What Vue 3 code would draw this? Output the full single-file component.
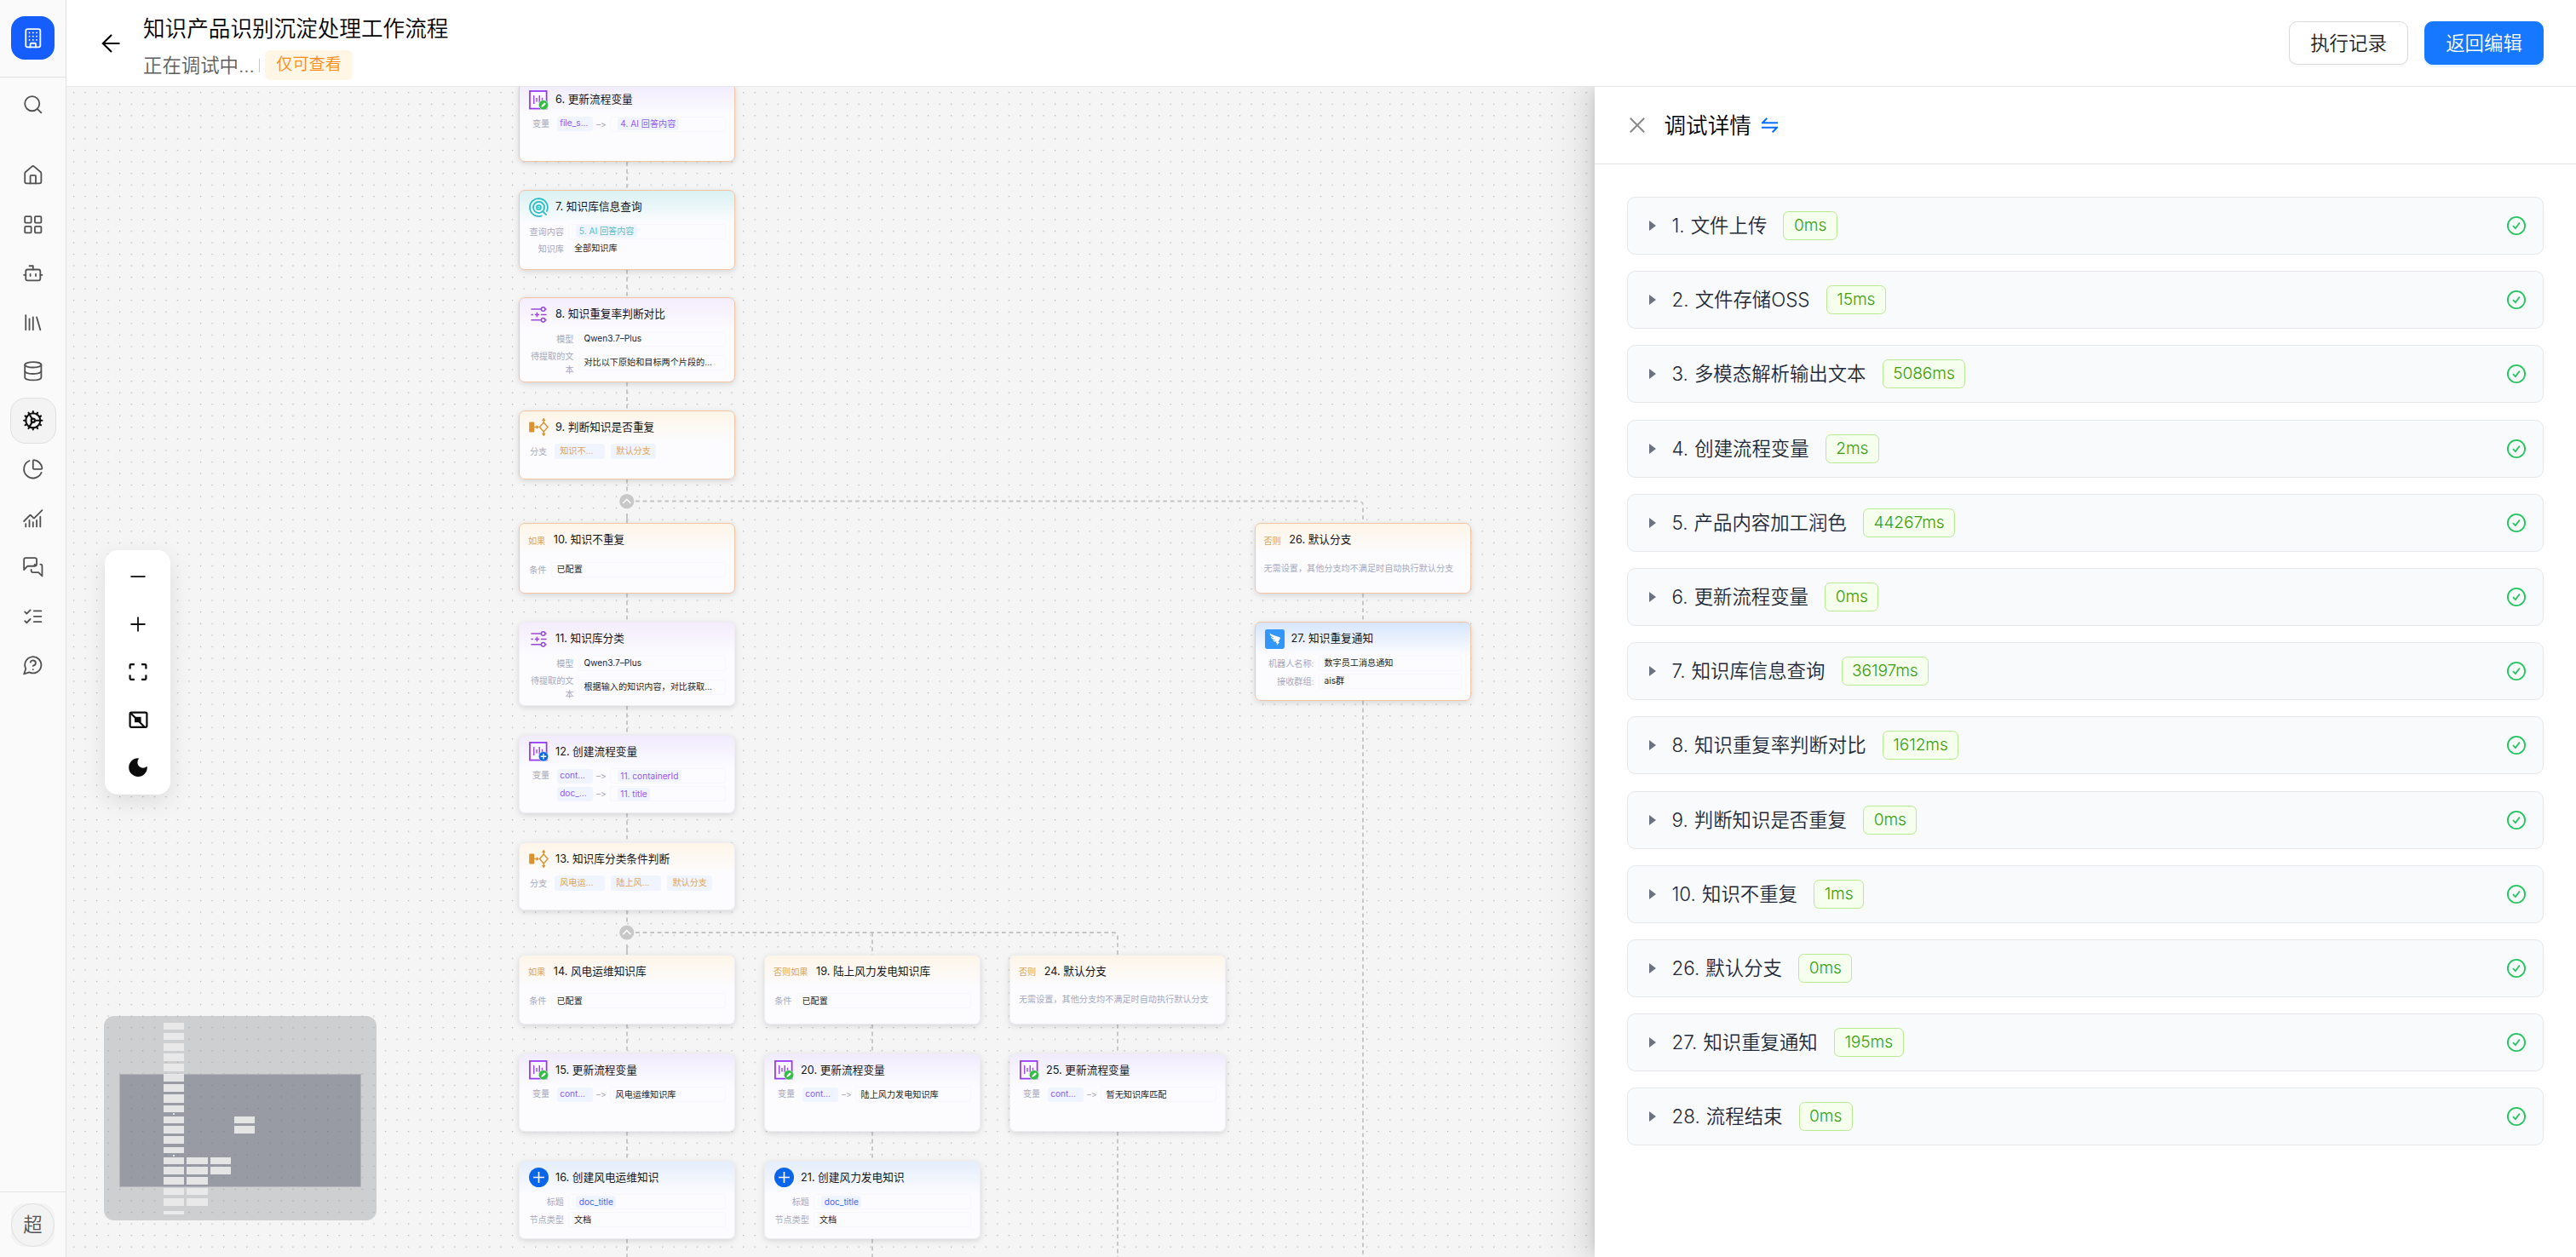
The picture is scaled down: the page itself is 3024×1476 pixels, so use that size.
<template>
  <div class="app">
    <aside class="sidebar">
      <div class="logo-wrap">
        <div class="logo">
          <svg viewBox="0 0 24 24" class="ico">
            <rect x="4" y="2" width="16" height="20" rx="2" />
            <path d="M9 22v-3.4a1 1 0 0 1 1-1h4a1 1 0 0 1 1 1V22" />
            <path d="M8 6h.01M12 6h.01M16 6h.01M8 10h.01M12 10h.01M16 10h.01M8 14h.01M12 14h.01M16 14h.01" />
          </svg>
        </div>
      </div>
      <div class="nav-item search">
        <svg viewBox="0 0 24 24" class="ico"><circle cx="11" cy="11" r="8" /><path d="m21 21-4.3-4.3" /></svg>
      </div>
      <nav class="nav">
        <div
          v-for="item in navItems"
          :key="item.name"
          class="nav-item"
          :class="{ active: item.name === activeNav }"
          @click="activeNav = item.name"
        >
          <svg viewBox="0 0 24 24" class="ico"><path v-for="d in item.paths" :key="d" :d="d" /></svg>
        </div>
      </nav>
      <div class="user-wrap">
        <div class="avatar"><span>超</span></div>
      </div>
    </aside>

    <main class="main">
      <header class="header">
        <svg class="back" viewBox="0 0 22 22"><path d="M21.5 11H1.5M12 1 1.8 11 12 21" /></svg>
        <div class="heading">
          <div class="title">知识产品识别沉淀处理工作流程</div>
          <div class="status">
            <span>正在调试中...</span>
            <i class="divider"></i>
            <span class="readonly">仅可查看</span>
          </div>
        </div>
        <button class="btn">执行记录</button>
        <button class="btn primary">返回编辑</button>
      </header>

      <div class="content">
        <div class="canvas">
          <svg class="layer" width="1794" height="1374">
            <defs>
              <pattern id="dots" x="7.83" y="6.1" width="13.555" height="13.555" patternUnits="userSpaceOnUse">
                <circle cx="0.7" cy="0.7" r="0.62" fill="#979797" />
              </pattern>
            </defs>
            <rect width="1794" height="1374" fill="url(#dots)" />
            <g class="edges">
              <path v-for="d in edges" :key="d" :d="d" />
              <path class="solid" d="M658 501V512M658 1007V1019" />
            </g>
            <g v-for="y in [486.7, 993]" :key="y" :transform="`translate(657.8 ${y})`">
              <circle r="8.6" fill="#c8c8c8" />
              <path d="M-4.6 2.3 0-2.4 4.6 2.3" fill="none" stroke="#fff" stroke-width="1.5" />
            </g>
          </svg>

          <div
            v-for="node in nodes"
            :key="node.id"
            class="node"
            :class="[node.type, { ran: node.ran }]"
            :style="{ left: node.x - 78 + 'px', top: node.y - 102 + 'px', height: node.h + 'px' }"
          >
            <div class="node-head">
              <span v-if="node.prefix" class="prefix">{{ node.prefix }}</span>
              <svg v-else-if="node.icon === 'update' || node.icon === 'create'" class="node-icon" viewBox="0 0 24 24">
                <rect x="1" y="1" width="20.5" height="21.5" fill="#fbf8ff" stroke="#9333f5" stroke-width="1.8" />
                <path d="M6 6.2v10.6M9.4 9.4v4.8M12.8 6.2v9M16.2 9v4" stroke="#9a48f0" stroke-width="1.5" />
                <circle cx="17.7" cy="18" r="5.9" :fill="node.icon === 'create' ? '#0a66e8' : '#33bb44'" stroke="#fff" stroke-width=".5" />
                <path v-if="node.icon === 'create'" d="M14.2 18h7M17.7 14.5v7" stroke="#fff" stroke-width="1.4" />
                <path v-else d="m15.4 20.3.4-1.9 3.2-3.2 1.5 1.5-3.2 3.2z" fill="#fff" stroke="#fff" stroke-width=".5" />
              </svg>
              <svg v-else-if="node.icon === 'search'" class="node-icon" viewBox="0 0 24 24">
                <g fill="none" stroke="#26bcc4" stroke-width="1.8">
                  <path d="M16.1 22.1A10.9 10.9 0 1 1 21.4 17.4" />
                  <circle cx="12" cy="12" r="6.8" />
                  <circle cx="12" cy="12" r="2.6" />
                  <path d="m16.5 16.5 5 5" />
                </g>
                <circle cx="12" cy="12" r="1" fill="#26bcc4" />
              </svg>
              <svg v-else-if="node.icon === 'extract'" class="node-icon" viewBox="0 0 24 24">
                <g fill="none" stroke="#9a4bd6" stroke-width="1.6">
                  <path d="M2.5 5.2h12.3M20 5.2h1.5M2.5 18.6h12.3M20 18.6h1.5M2.5 12h2.6M14.5 12h7M7 12h5.6M9.8 9.2v5.6" />
                  <circle cx="17.4" cy="5.2" r="2.4" />
                  <circle cx="17.4" cy="18.6" r="2.4" />
                </g>
              </svg>
              <svg v-else-if="node.icon === 'branch'" class="node-icon" viewBox="0 0 24 24">
                <rect x=".2" y="5.8" width="6.3" height="12.4" rx="1" fill="#d9922f" />
                <g fill="none" stroke="#d9922f" stroke-width="1.5">
                  <path d="M6.5 12h4.5M18 1.8v4.4M18 17.8v4.4" />
                  <path d="m18 6.3 5 5.7-5 5.7-5-5.7z" />
                </g>
                <path d="m9 9.4 3.4 2.6L9 14.6zM15.6 4.2 18 .8l2.4 3.4zM15.6 19.8l2.4 3.4 2.4-3.4z" fill="#d9922f" />
              </svg>
              <svg v-else-if="node.icon === 'plus'" class="node-icon" viewBox="0 0 24 24">
                <circle cx="12" cy="12" r="12" fill="#0a66e8" />
                <path d="M5.3 12h13.4M12 5.3v13.4" stroke="#fff" stroke-width="1.7" />
              </svg>
              <svg v-else class="node-icon" viewBox="0 0 24 24">
                <rect width="24" height="24" rx="2.6" fill="#3296fa" />
                <path d="M5.6 4.6c3.4 2.2 8.3 3.7 12.2 5 .8.3 1 .9.7 1.6-.7 1.7-1.7 3.3-2.4 4.4h1.7l-3.6 4.2.6-2.9h-1.5l.6-1.9c-2.2.2-3.6-.5-4.4-1.8 1.4.2 2.3.1 3.2-.1-3-.5-4.9-1.6-5.7-3.7 1.5.7 2.9.9 4.3.9-3-1-5-2.8-5.7-5.7z" fill="#fff" />
              </svg>
              <span class="node-title">{{ node.id }}. {{ node.title }}</span>
            </div>

            <div v-if="node.note" class="note">{{ node.note }}</div>

            <div v-else-if="node.branches" class="branches">
              <span class="label">分支</span>
              <span v-for="(b, i) in node.branches" :key="i" class="branch-tag" :class="{ cut: b.endsWith('...') }">{{ b }}</span>
            </div>

            <div v-else-if="node.vars" class="vars">
              <span class="label">变量</span>
              <div class="rows">
                <div v-for="v in node.vars" :key="v.name" class="var-row">
                  <span class="chip name">{{ v.name }}</span>
                  <span class="arrow">–&gt;</span>
                  <span class="field"><span :class="{ chip: v.ref }">{{ v.value }}</span></span>
                </div>
              </div>
            </div>

            <div v-else class="form">
              <div v-for="f in node.fields" :key="f.label" class="form-row">
                <span class="label" :style="{ width: node.labelWidth + 'px' }">{{ f.label }}</span>
                <span class="field" :class="{ plain: f.plain }"><span :class="{ chip: f.ref }">{{ f.value }}</span></span>
              </div>
            </div>
          </div>

          <div class="toolbar">
            <svg viewBox="0 0 24 24"><path class="line" d="M3.5 12h17" /></svg>
            <svg viewBox="0 0 24 24"><path class="line" d="M3.5 12h17M12 3.5v17" /></svg>
            <svg viewBox="0 0 24 24"><path class="thick" d="M2.6 8.5V4.2a1 1 0 0 1 1-1h4.3M16.1 3.2h4.3a1 1 0 0 1 1 1v4.3M21.4 15.5v4.3a1 1 0 0 1-1 1h-4.3M7.9 20.8H3.6a1 1 0 0 1-1-1v-4.3" /></svg>
            <svg viewBox="0 0 24 24">
              <rect class="thick" x="2.6" y="3.6" width="19.8" height="17.2" rx="1.5" />
              <path class="thick" d="m3 4 16.5 16.5" />
              <rect x="8" y="8.8" width="7.6" height="6.4" fill="#0b0b0c" />
            </svg>
            <svg viewBox="0 0 24 24"><path d="M12 1.3A10.8 10.8 0 1 0 22.8 12c0-.7-.1-1-.4-.9a6.600 6.600 0 0 1-9.600-9c.3-.5 0-.8-.8-.8z" fill="#0b0b0c" /></svg>
          </div>

          <svg class="minimap" width="320" height="240">
            <rect class="mask" width="320" height="240" />
            <rect class="view" x="18.5" y="68.5" width="283" height="132" />
            <rect v-for="(r, i) in mapNodes" :key="i" :x="r[0]" :y="r[1]" :width="r[2]" :height="r[3]" />
          </svg>
        </div>

        <section class="drawer">
          <div class="drawer-head">
            <svg class="close" viewBox="0 0 18 18"><path d="m.8.8 16.4 16.4M17.2.8.8 17.2" /></svg>
            <span class="drawer-title">调试详情</span>
            <svg class="swap" viewBox="0 0 19 18"><path d="M19 6.2H1L6.3.8M0 11.8h18l-5.3 5.4" /></svg>
          </div>
          <div class="steps">
            <div v-for="step in steps" :key="step.id" class="step">
              <i class="caret"></i>
              <span class="step-name">{{ step.id }}. {{ step.name }}</span>
              <span class="cost">{{ step.cost }}ms</span>
              <svg class="ok" viewBox="0 0 22 22"><circle cx="11" cy="11" r="10.1" /><path d="m7 11.2 2.9 2.9 5-6.6" /></svg>
            </div>
          </div>
        </section>
      </div>
    </main>
  </div>
</template>

<script setup>
import { ref } from 'vue';

const activeNav = ref('workflow');

const navItems = [
  { name: 'home', paths: ['M15 21v-8a1 1 0 0 0-1-1h-4a1 1 0 0 0-1 1v8', 'M3 10a2 2 0 0 1 .709-1.528l7-5.999a2 2 0 0 1 2.582 0l7 5.999A2 2 0 0 1 21 10v9a2 2 0 0 1-2 2H5a2 2 0 0 1-2-2z'] },
  { name: 'apps', paths: ['M4 3h5a1 1 0 0 1 1 1v5a1 1 0 0 1-1 1H4a1 1 0 0 1-1-1V4a1 1 0 0 1 1-1z', 'M15 3h5a1 1 0 0 1 1 1v5a1 1 0 0 1-1 1h-5a1 1 0 0 1-1-1V4a1 1 0 0 1 1-1z', 'M15 14h5a1 1 0 0 1 1 1v5a1 1 0 0 1-1 1h-5a1 1 0 0 1-1-1v-5a1 1 0 0 1 1-1z', 'M4 14h5a1 1 0 0 1 1 1v5a1 1 0 0 1-1 1H4a1 1 0 0 1-1-1v-5a1 1 0 0 1 1-1z'] },
  { name: 'bot', paths: ['M12 8V4H8', 'M6 8h12a2 2 0 0 1 2 2v8a2 2 0 0 1-2 2H6a2 2 0 0 1-2-2v-8a2 2 0 0 1 2-2z', 'M2 14h2M20 14h2M15 13v2M9 13v2'] },
  { name: 'library', paths: ['m16 6 4 14', 'M12 6v14', 'M8 8v12', 'M4 4v16'] },
  { name: 'database', paths: ['M21 5c0 1.66-4 3-9 3S3 6.66 3 5s4-3 9-3 9 1.34 9 3z', 'M3 5v14c0 1.66 4 3 9 3s9-1.34 9-3V5', 'M3 12c0 1.66 4 3 9 3s9-1.34 9-3'] },
  { name: 'workflow', paths: ['M12 20a8 8 0 1 0 0-16 8 8 0 0 0 0 16Z', 'M12 14a2 2 0 1 0 0-4 2 2 0 0 0 0 4Z', 'M12 2v2M12 22v-2M17 20.66l-1-1.73M11 10.27 7 3.34M20.66 17l-1.73-1M3.34 7l1.73 1M14 12h8M2 12h2M20.66 7l-1.73 1M3.34 17l1.73-1M17 3.34l-1 1.73M11 13.73l-4 6.93'] },
  { name: 'pie', paths: ['M21 12c.552 0 1.005-.449.95-.998a10 10 0 0 0-8.953-8.951c-.55-.055-.998.398-.998.95v8a1 1 0 0 0 1 1z', 'M21.21 15.89A10 10 0 1 1 8 2.83'] },
  { name: 'chart', paths: ['M12 16v5M16 14v7M20 10v11M4 18v3M8 14v7', 'm22 3-8.646 8.646a.5.5 0 0 1-.708 0L9.354 8.354a.5.5 0 0 0-.707 0L2 15'] },
  { name: 'chat', paths: ['M14 9a2 2 0 0 1-2 2H6l-4 4V4a2 2 0 0 1 2-2h10a2 2 0 0 1 2 2v5a2 2 0 0 1-2 2h-2', 'M20 9a2 2 0 0 1 2 2v11l-4-4h-6a2 2 0 0 1-2-2v-1'] },
  { name: 'tasks', paths: ['m3 17 2 2 4-4', 'm3 7 2 2 4-4', 'M13 6h8M13 12h8M13 18h8'] },
  { name: 'help', paths: ['M7.9 20A9 9 0 1 0 4 16.1L2 22Z', 'M9.09 9a3 3 0 0 1 5.83 1c0 2-3 3-3 3', 'M12 17h.01'] },
];

const note = '无需设置，其他分支均不满足时自动执行默认分支';
const configured = [{ label: '条件', value: '已配置' }];

// Position of every node on the canvas, in page pixels
const nodes = [
  { id: 6, title: '更新流程变量', type: 'var', icon: 'update', x: 609, y: 97, h: 93, ran: true, vars: [{ name: 'file_s...', value: '4. AI 回答内容', ref: true }] },
  { id: 7, title: '知识库信息查询', type: 'query', icon: 'search', x: 609, y: 223, h: 93.5, ran: true, labelWidth: 41, fields: [{ label: '查询内容', value: '5. AI 回答内容', ref: true }, { label: '知识库', value: '全部知识库', plain: true }] },
  { id: 8, title: '知识重复率判断对比', type: 'extract', icon: 'extract', x: 609, y: 349, h: 99.5, ran: true, labelWidth: 52.5, fields: [{ label: '模型', value: 'Qwen3.7–Plus' }, { label: '待提取的文本', value: '对比以下原始和目标两个片段的...' }] },
  { id: 9, title: '判断知识是否重复', type: 'cond', icon: 'branch', x: 609, y: 481.7, h: 81, ran: true, branches: ['知识不...', '默认分支'] },
  { id: 10, title: '知识不重复', type: 'cond if', prefix: '如果', x: 609, y: 614, h: 83, ran: true, labelWidth: 20.5, fields: configured },
  { id: 11, title: '知识库分类', type: 'extract', icon: 'extract', x: 609, y: 730, h: 98.5, labelWidth: 52.5, fields: [{ label: '模型', value: 'Qwen3.7–Plus' }, { label: '待提取的文本', value: '根据输入的知识内容，对比获取...' }] },
  { id: 12, title: '创建流程变量', type: 'var', icon: 'create', x: 609, y: 862.5, h: 92.5, vars: [{ name: 'cont...', value: '11. containerId', ref: true }, { name: 'doc_...', value: '11. title', ref: true }] },
  { id: 13, title: '知识库分类条件判断', type: 'cond', icon: 'branch', x: 609, y: 988.7, h: 80.5, branches: ['风电运...', '陆上风...', '默认分支'] },
  { id: 14, title: '风电运维知识库', type: 'cond if', prefix: '如果', x: 609, y: 1120.5, h: 82.5, labelWidth: 20.5, fields: configured },
  { id: 15, title: '更新流程变量', type: 'var', icon: 'update', x: 609, y: 1236.5, h: 92.5, vars: [{ name: 'cont...', value: '风电运维知识库' }] },
  { id: 16, title: '创建风电运维知识', type: 'doc', icon: 'plus', x: 609, y: 1362.5, h: 92.5, labelWidth: 41, fields: [{ label: '标题', value: 'doc_title', ref: true }, { label: '节点类型', value: '文档' }] },
  { id: 19, title: '陆上风力发电知识库', type: 'cond if', prefix: '否则如果', x: 897, y: 1120.5, h: 82.5, labelWidth: 20.5, fields: configured },
  { id: 20, title: '更新流程变量', type: 'var', icon: 'update', x: 897, y: 1236.5, h: 92.5, vars: [{ name: 'cont...', value: '陆上风力发电知识库' }] },
  { id: 21, title: '创建风力发电知识', type: 'doc', icon: 'plus', x: 897, y: 1362.5, h: 92.5, labelWidth: 41, fields: [{ label: '标题', value: 'doc_title', ref: true }, { label: '节点类型', value: '文档' }] },
  { id: 24, title: '默认分支', type: 'cond if', prefix: '否则', x: 1185, y: 1120.5, h: 82.5, note },
  { id: 25, title: '更新流程变量', type: 'var', icon: 'update', x: 1185, y: 1236.5, h: 92.5, vars: [{ name: 'cont...', value: '暂无知识库匹配' }] },
  { id: 26, title: '默认分支', type: 'cond if', prefix: '否则', x: 1472.5, y: 614, h: 83, ran: true, note },
  { id: 27, title: '知识重复通知', type: 'notice', icon: 'ding', x: 1472.5, y: 730, h: 93, ran: true, labelWidth: 58, fields: [{ label: '机器人名称:', value: '数字员工消息通知' }, { label: '接收群组:', value: 'ais群' }] },
];

const edges = [
  'M658 88V121',
  'M658 215V247',
  'M658 347V380',
  'M658 461V478',
  'M668 486.5H1517Q1522 486.5 1522 491.5V512',
  'M658 595V628',
  'M658 727V761',
  'M658 853V887',
  'M658 967V984',
  'M668 993H1229Q1234 993 1234 998V1019',
  'M946 993V1019',
  'M658 1101V1135M946 1101V1135M1234 1101V1135',
  'M658 1227V1261M946 1227V1261',
  'M658 1353V1374M946 1353V1374',
  'M1234 1227V1374',
  'M1522 595V628M1522 721V1374',
];

// x, y, width, height of the blocks in the minimap
const mapNodes = [
  [70, 8, 24, 8], [70, 20, 24, 8], [70, 32, 24, 9], [70, 44, 24, 9], [70, 56, 24, 9], [70, 68, 24, 9],
  [70, 80, 24, 9], [70, 92, 24, 10], [70, 105, 24, 8], [81, 114, 2, 2], [70, 118, 24, 8], [70, 129, 24, 9],
  [70, 141, 24, 9], [70, 154, 24, 7], [81, 163, 2, 2], [70, 166, 24, 8], [70, 177, 24, 9], [70, 189, 24, 9],
  [70, 202, 24, 8], [70, 214, 24, 9], [70, 229, 24, 4],
  [97, 166, 25, 8], [97, 177, 25, 9], [97, 189, 25, 9], [97, 202, 25, 8], [97, 214, 25, 9],
  [125, 166, 24, 8], [125, 177, 24, 9], [153, 118, 24, 8], [153, 129, 24, 9],
];

const steps = [
  { id: 1, name: '文件上传', cost: 0 },
  { id: 2, name: '文件存储OSS', cost: 15 },
  { id: 3, name: '多模态解析输出文本', cost: 5086 },
  { id: 4, name: '创建流程变量', cost: 2 },
  { id: 5, name: '产品内容加工润色', cost: 44267 },
  { id: 6, name: '更新流程变量', cost: 0 },
  { id: 7, name: '知识库信息查询', cost: 36197 },
  { id: 8, name: '知识重复率判断对比', cost: 1612 },
  { id: 9, name: '判断知识是否重复', cost: 0 },
  { id: 10, name: '知识不重复', cost: 1 },
  { id: 26, name: '默认分支', cost: 0 },
  { id: 27, name: '知识重复通知', cost: 195 },
  { id: 28, name: '流程结束', cost: 0 },
];
</script>

<style>
body {
  margin: 0;
  overflow: hidden;
}
</style>

<style scoped>
.app {
  display: flex;
  width: 3024px;
  height: 1476px;
  overflow: hidden;
  background: #fff;
  font-family: Inter, "Noto Sans CJK SC", sans-serif;
  font-weight: 350;
  font-feature-settings: "calt" 0;
  color: #111;
}

.app * {
  box-sizing: border-box;
}

.sidebar {
  display: flex;
  flex-direction: column;
  align-items: center;
  width: 78px;
  flex-shrink: 0;
  background: #fafafa;
  border-right: 1px solid #e2e2e2;
}

.logo-wrap {
  display: flex;
  justify-content: center;
  width: 100%;
  height: 91px;
  padding-top: 19px;
  border-bottom: 1px solid #e2e2e2;
}

.logo {
  display: flex;
  align-items: center;
  justify-content: center;
  width: 51px;
  height: 51px;
  border-radius: 16px;
  background: #155dfc;
}

.logo .ico {
  stroke: #fff;
}

.ico {
  width: 25.6px;
  height: 25.6px;
  fill: none;
  stroke: #525252;
  stroke-width: 1.7;
  stroke-linecap: round;
  stroke-linejoin: round;
}

.nav-item {
  display: flex;
  align-items: center;
  justify-content: center;
  width: 54px;
  height: 54px;
  border: 1px solid transparent;
  border-radius: 18px;
}

.nav-item.active {
  background: #f3f3f3;
  border-color: #e0e0e0;
}

.nav-item.active .ico {
  stroke: #111;
  stroke-width: 2;
}

.search {
  margin-top: 5px;
}

.nav {
  display: flex;
  flex-direction: column;
  gap: 3.5px;
  margin-top: 29px;
}

.user-wrap {
  display: flex;
  justify-content: center;
  width: 100%;
  height: 77px;
  margin-top: auto;
  padding-top: 13px;
  border-top: 1px solid #e2e2e2;
}

.avatar {
  width: 51px;
  height: 51px;
  border-radius: 16px;
  background: #f3f3f3;
}

.avatar span {
  display: block;
  height: 51px;
  border: 1px solid #dfdfdf;
  border-radius: 50%;
  color: #52525b;
  font-size: 22.4px;
  line-height: 48px;
  text-align: center;
}

.main {
  flex: 1;
  min-width: 0;
}

.header {
  position: relative;
  z-index: 2;
  display: flex;
  align-items: center;
  height: 102px;
  padding: 0 38px 0 41px;
  background: #fff;
  border-bottom: 1px solid #e5e6ea;
}

.back {
  width: 22px;
  height: 22px;
  fill: none;
  stroke: #000;
  stroke-width: 2.1;
}

.heading {
  flex: 1;
  margin-left: 27px;
  padding-top: 5px;
}

.title {
  font-size: 25.6px;
  line-height: 36px;
  color: #000;
}

.status {
  display: flex;
  align-items: center;
  margin-top: 7px;
  margin-bottom: -4px;
  font-size: 22.4px;
  line-height: 35px;
  color: #5c5c5c;
}

.divider {
  width: 1.5px;
  height: 16px;
  margin: 0 6px 0 5px;
  background: #c8c8c8;
}

.readonly {
  height: 35px;
  padding: 0 12.8px;
  border-radius: 6.4px;
  background: #fff6e6;
  color: #fa8c16;
  font-size: 19.2px;
  line-height: 33px;
}

.btn {
  width: 140px;
  height: 51px;
  margin-left: 19px;
  padding: 0;
  border: 1.5px solid #d9d9d9;
  border-radius: 9.6px;
  background: #fff;
  box-shadow: 0 3px 0 rgba(0, 0, 0, 0.02);
  color: #222;
  font-family: inherit;
  font-weight: inherit;
  font-size: 22.4px;
  line-height: 46px;
}

.btn.primary {
  border-color: #1677ff;
  background: #1677ff;
  box-shadow: 0 3px 0 rgba(5, 145, 255, 0.1);
  color: #fff;
}

.content {
  display: flex;
  height: 1374px;
}

.canvas {
  position: relative;
  flex: 1;
  overflow: hidden;
  background: #f5f5f5;
}

.layer {
  display: block;
}

.edges path {
  fill: none;
  stroke: #c3c3c5;
  stroke-width: 1.8;
  stroke-dasharray: 4.8 3.8;
}

.edges .solid {
  stroke-dasharray: none;
}

.node {
  position: absolute;
  width: 254px;
  border: 1px solid #ececf2;
  border-radius: 7px;
  background: linear-gradient(var(--tint), #fcfcff 38px);
  box-shadow: 0 2px 7px rgba(0, 0, 0, 0.13);
  font-size: 10.15px;
  font-weight: 400;
}

.node.ran {
  border-color: #f3c4a2;
}

.node.var {
  --tint: #f1ebfd;
  --accent: #8f5cec;
}

.node.query {
  --tint: #daf1f2;
  --accent: #52bfc8;
}

.node.extract {
  --tint: #f4ecfc;
  --accent: #8f5cec;
}

.node.cond {
  --tint: #fdf5e8;
  --accent: #dfa653;
}

.node.doc {
  --tint: #e4edfb;
  --accent: #3a6fe0;
}

.node.notice {
  --tint: #d6e6fc;
  --accent: #3a6fe0;
}

.node-head {
  display: flex;
  align-items: center;
  height: 38.6px;
  padding-left: 11px;
}

.node-icon {
  width: 23px;
  height: 23px;
  margin-right: 8px;
}

.node-title {
  font-size: 12.7px;
  line-height: 18px;
  color: #15151a;
}

.prefix {
  margin: 0 9.5px 0 -1px;
  color: #d9a35c;
}

.label {
  flex-shrink: 0;
  color: #a6a9c0;
  line-height: 16px;
  text-align: right;
}

.note {
  padding: 5px 10px;
  color: #a6a9c0;
  line-height: 16px;
  white-space: nowrap;
}

.branches {
  display: flex;
  align-items: center;
  padding-left: 12px;
}

.branch-tag {
  height: 18px;
  margin-left: 6.8px;
  padding: 0 6.5px;
  border-radius: 3px;
  background: #f0f4ff;
  color: var(--accent);
  line-height: 17px;
  white-space: nowrap;
}

.label + .branch-tag {
  margin-left: 8.5px;
}

.branch-tag.cut {
  width: 59.3px;
}

.vars {
  display: flex;
  align-items: flex-start;
  padding: 0 10px 0 15px;
}

.rows {
  display: flex;
  flex: 1;
  flex-direction: column;
  gap: 3.3px;
  margin-left: 8.5px;
}

.var-row {
  display: flex;
  align-items: center;
}

.chip {
  padding: 0 3.4px;
  margin-left: 2.4px;
  border-radius: 3px;
  background: #f0f4ff;
  color: var(--accent);
  line-height: 14.5px;
}

.field .chip {
  display: inline-block;
}

.chip.name {
  width: 42.3px;
  height: 17px;
  margin-left: 0;
  line-height: 15px;
}

.arrow {
  width: 19.5px;
  color: #a3a5af;
  text-align: center;
}

.field {
  display: flex;
  flex: 1;
  align-items: center;
  height: 18px;
  padding: 0 6px;
  border: 1px solid #f7f7fb;
  border-radius: 3px;
  color: #1d1d22;
  line-height: 15px;
  white-space: nowrap;
}

.field.plain {
  height: 16px;
  border-color: transparent;
}

.form {
  display: flex;
  flex-direction: column;
  gap: 3px;
  padding: 0 10px 0 11px;
}

.node.if .form {
  padding-top: 6px;
}

.form-row {
  display: flex;
  align-items: center;
  gap: 5px;
}

.toolbar {
  position: absolute;
  left: 45px;
  top: 544px;
  display: flex;
  flex-direction: column;
  align-items: center;
  gap: 32px;
  width: 77px;
  height: 287px;
  padding-top: 19px;
  border-radius: 15px;
  background: #fff;
  box-shadow: 0 8px 26px rgba(0, 0, 0, 0.1);
}

.toolbar svg {
  width: 24px;
  height: 24px;
}

.line {
  stroke: #111;
  stroke-width: 1.8;
}

.thick {
  fill: none;
  stroke: #0b0b0c;
  stroke-width: 2.2;
}

.minimap {
  position: absolute;
  left: 44px;
  top: 1091px;
  border-radius: 12px;
  fill: #fff;
  fill-opacity: 0.6;
}

.minimap .mask {
  fill: #94969b;
  fill-opacity: 0.4;
}

.minimap .view {
  fill: #5a5d70;
  fill-opacity: 0.46;
  stroke: #b2b4ba;
}

.minimap rect:nth-child(n + 3) {
  fill: #ebebeb;
  fill-opacity: 0.93;
}

.drawer {
  position: relative;
  z-index: 1;
  width: 1152px;
  flex-shrink: 0;
  background: #fff;
  box-shadow: -10px 0 26px rgba(0, 0, 0, 0.08), -5px 0 10px -6px rgba(0, 0, 0, 0.12), -14px 0 45px 13px rgba(0, 0, 0, 0.05);
}

.drawer-head {
  display: flex;
  align-items: center;
  height: 91px;
  padding-left: 41px;
  border-bottom: 1px solid #e3e3e5;
}

.close {
  width: 18px;
  height: 18px;
  stroke: #888;
  stroke-width: 2;
}

.drawer-title {
  margin: 0 12px 0 22.5px;
  padding-top: 2px;
  font-size: 25.6px;
  line-height: 38px;
  color: #000;
}

.swap {
  width: 19px;
  height: 18px;
  fill: none;
  stroke: #0a6cff;
  stroke-width: 2;
}

.steps {
  display: flex;
  flex-direction: column;
  gap: 19.2px;
  padding: 38px 38px 0;
}

.step {
  display: flex;
  align-items: center;
  height: 68px;
  padding: 0 20px 0 25px;
  border: 1px solid #e5e7eb;
  border-radius: 9.6px;
  background: #f9fafc;
}

.caret {
  border-left: 8.5px solid #6b7280;
  border-top: 6.5px solid transparent;
  border-bottom: 6.5px solid transparent;
}

.step-name {
  margin-left: 18.5px;
  font-size: 22.4px;
  line-height: 32px;
  word-spacing: 0.8px;
  color: #1f2937;
}

.cost {
  height: 34px;
  margin-left: 19.2px;
  padding: 0 11.5px;
  border: 1px solid #b7eb8f;
  border-radius: 6.4px;
  background: #f6ffed;
  color: #389e0d;
  font-size: 19.2px;
  line-height: 31px;
  letter-spacing: -0.1px;
}

.ok {
  width: 22px;
  height: 22px;
  margin-left: auto;
  fill: none;
  stroke: #22c55e;
  stroke-width: 1.8;
}
</style>
